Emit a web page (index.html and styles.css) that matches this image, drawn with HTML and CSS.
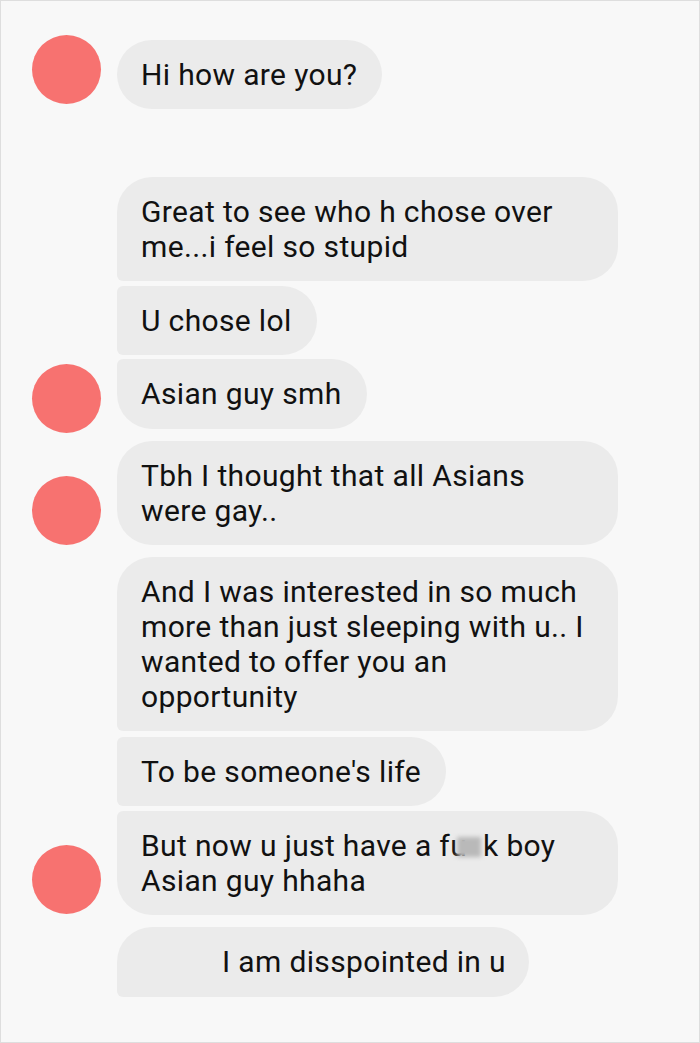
FILE: index.html
```html
<!DOCTYPE html>
<html lang="en">
<head>
<meta charset="utf-8">
<title>Chat</title>
<link rel="stylesheet" href="styles.css">
</head>
<body>
<div class="chat">
  <div class="row">
    <div class="avatar avatar--up"></div>
    <div class="bubble">Hi how are you?</div>
  </div>
  <div class="row row--first">
    <div class="slot"></div>
    <div class="bubble bl-s">Great to see who h chose over me...i feel so stupid</div>
  </div>
  <div class="row">
    <div class="slot"></div>
    <div class="bubble tl-s bl-s">U chose lol</div>
  </div>
  <div class="row row--tight">
    <div class="avatar avatar--down"></div>
    <div class="bubble tl-s bubble--tall">Asian guy smh</div>
  </div>
  <div class="row row--group">
    <div class="avatar"></div>
    <div class="bubble">Tbh I thought that all Asians were gay..</div>
  </div>
  <div class="row row--group">
    <div class="slot"></div>
    <div class="bubble bl-s">And I was interested in so much more than just sleeping with u.. I wanted to offer you an opportunity</div>
  </div>
  <div class="row row--loose">
    <div class="slot"></div>
    <div class="bubble tl-s bl-s">To be someone's life</div>
  </div>
  <div class="row">
    <div class="avatar avatar--one"></div>
    <div class="bubble tl-s">But now u just have a fu<span class="blur"></span>k boy Asian guy hhaha</div>
  </div>
  <div class="row row--group">
    <div class="slot"></div>
    <div class="bubble bl-s bubble--right bubble--tall">I am disspointed in u</div>
  </div>
</div>
</body>
</html>
```
FILE: styles.css
```css
* { box-sizing: border-box; }
html, body { margin: 0; padding: 0; }
body {
  background: #f8f8f8;
  font-family: Roboto, "Noto Sans", sans-serif;
  color: #111;
}
.chat {
  width: 700px;
  height: 1043px;
  border: 1px solid #dedede;
  padding-top: 34px;
  display: flex;
  flex-direction: column;
  gap: 5px;
}
.row {
  display: grid;
  grid-template-columns: 116px auto;
  justify-content: start;
  align-items: end;
}
.row--first { margin-top: 63px; }
.row--group { margin-top: 7px; }
.row--tight { margin-top: -1px; }
.row--loose { margin-top: 1px; }
.slot { width: 69px; }
.avatar {
  width: 69px;
  height: 69px;
  border-radius: 50%;
  background: #f77270;
  margin-left: 31px;
}
.avatar--up { margin-bottom: 5px; }
.avatar--down { margin-bottom: -4px; }
.avatar--one { margin-bottom: 1px; }
.bubble {
  background: #ebebeb;
  max-width: 501px;
  font-size: 30px;
  letter-spacing: 0.35px;
  line-height: 35px;
  padding: 17px 25px 17px 24px;
  border-radius: 35px;
}
.bubble--tall { padding-bottom: 18px; }
.tl-s { border-top-left-radius: 6px; }
.bl-s { border-bottom-left-radius: 6px; }
.bubble--right { padding-left: 105px; padding-right: 23px; }
.blur {
  display: inline-block;
  width: 24px;
  height: 20px;
  margin-left: -10px;
  margin-right: 2px;
  vertical-align: -1px;
  background: #b9b9b9;
  filter: blur(2px);
}
```
